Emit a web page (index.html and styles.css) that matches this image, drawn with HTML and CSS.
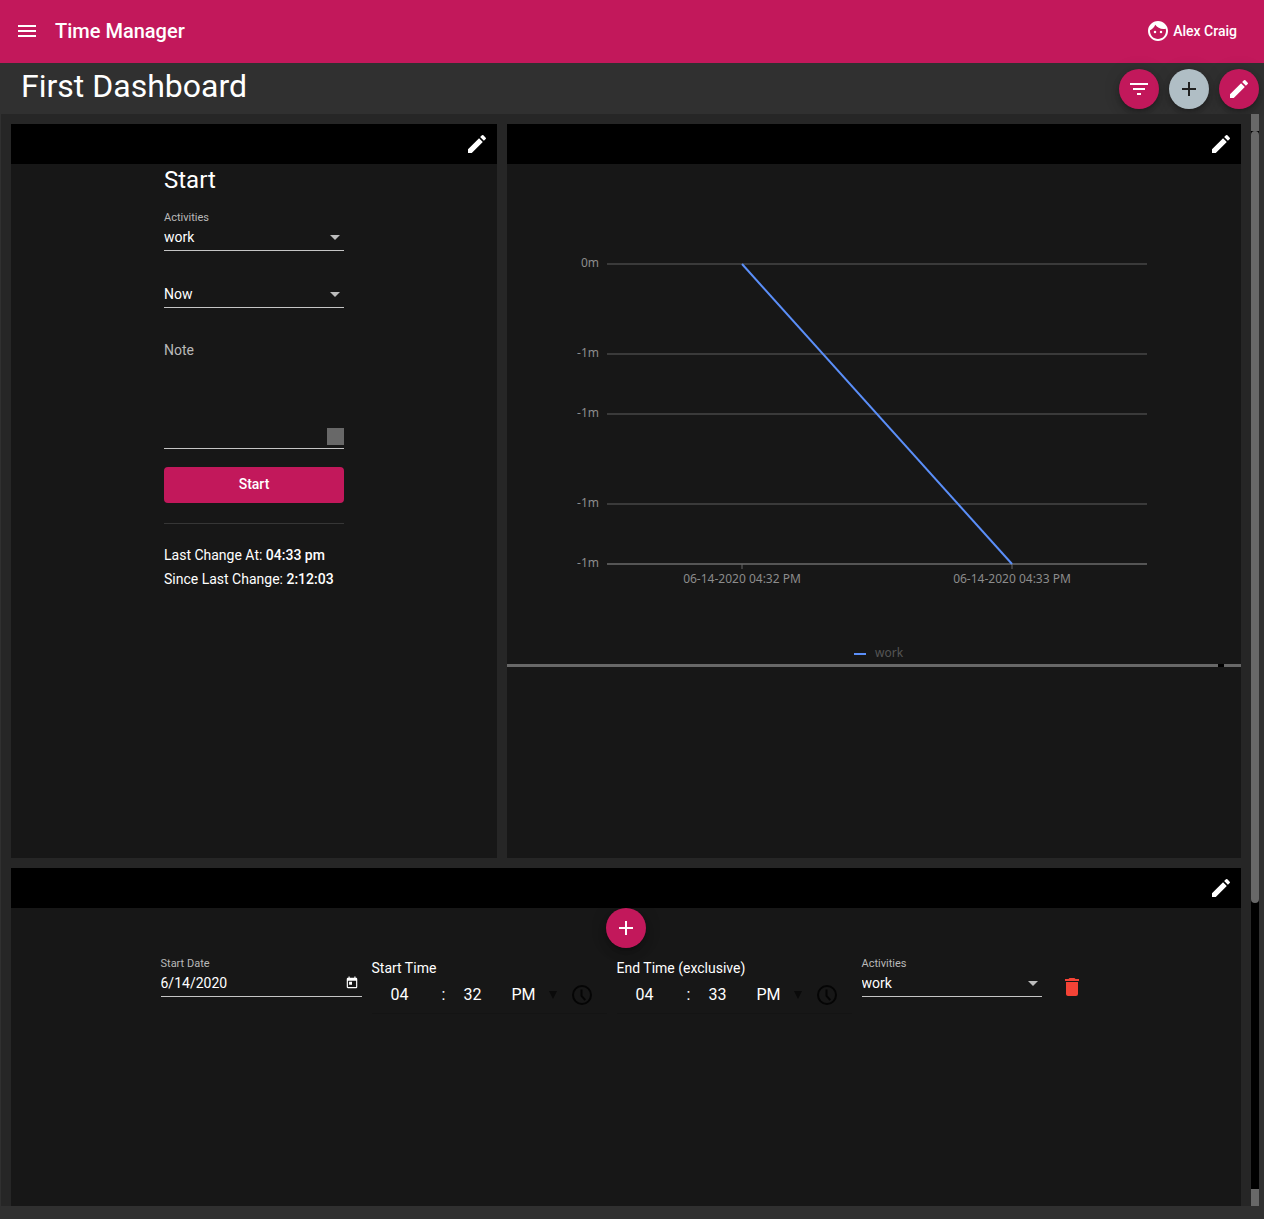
FILE: index.html
```html
<!DOCTYPE html>
<html lang="en">
<head>
<meta charset="utf-8">
<meta name="viewport" content="width=device-width, initial-scale=1">
<title>Time Manager</title>
<link rel="stylesheet" href="styles.css">
</head>
<body>
<svg class="sprite" aria-hidden="true">
  <symbol id="pencil" viewBox="0 0 24 24"><path d="M3 17.25V21h3.75L17.81 9.94l-3.75-3.75L3 17.25zM20.71 7.04a1 1 0 0 0 0-1.41l-2.34-2.34a1 1 0 0 0-1.41 0l-1.83 1.83 3.75 3.75 1.83-1.83z"/></symbol>
  <symbol id="plus" viewBox="0 0 24 24"><path d="M19 13h-6v6h-2v-6H5v-2h6V5h2v6h6v2z"/></symbol>
  <symbol id="caret" viewBox="0 0 10 5"><path d="M0 0h10L5 5z"/></symbol>
  <symbol id="small-caret" viewBox="0 0 8 8"><path d="M0 0h8L4 8z"/></symbol>
  <symbol id="clock" viewBox="0 0 24 24"><path d="M12 2a10 10 0 1 0 0 20 10 10 0 0 0 0-20zm0 18a8 8 0 1 1 0-16 8 8 0 0 1 0 16zM10.500 6.500h2v6l3.500 4-1.500 1.300-4-4.500z"/></symbol>
</svg>

<header class="toolbar">
  <button class="icon-button" type="button" aria-label="Menu">
    <svg class="icon" viewBox="0 0 24 24"><path d="M3 18h18v-2H3v2zm0-5h18v-2H3v2zm0-7v2h18V6H3z"/></svg>
  </button>
  <span class="brand">Time Manager</span>
  <button class="user" type="button">
    <svg class="icon" viewBox="0 0 24 24"><path d="M9 11.75a1.25 1.25 0 1 0 0 2.5 1.25 1.25 0 0 0 0-2.5zm6 0a1.25 1.25 0 1 0 0 2.5 1.25 1.25 0 0 0 0-2.5zM12 2C6.48 2 2 6.48 2 12s4.48 10 10 10 10-4.48 10-10S17.52 2 12 2zm0 18c-4.41 0-8-3.59-8-8 0-.29.02-.58.05-.86 2.36-1.05 4.23-2.98 5.21-5.37C11.07 8.33 14.05 10 17.42 10c.78 0 1.53-.09 2.25-.26.21.71.33 1.47.33 2.26 0 4.41-3.59 8-8 8z"/></svg>
    Alex Craig
  </button>
</header>

<div class="titlebar">
  <h1 class="page-title">First Dashboard</h1>
  <button class="fab" type="button" aria-label="Filter">
    <svg class="icon" viewBox="0 0 24 24"><path d="M10 18h4v-2h-4v2zM3 6v2h18V6H3zm3 7h12v-2H6v2z"/></svg>
  </button>
  <button class="fab fab-grey" type="button" aria-label="Add widget"><svg class="icon"><use href="#plus"/></svg></button>
  <button class="fab" type="button" aria-label="Edit dashboard"><svg class="icon"><use href="#pencil"/></svg></button>
</div>

<div class="board">
  <main class="grid">
    <section class="card">
      <div class="card-bar">
        <button class="icon-button" type="button" aria-label="Edit widget"><svg class="icon"><use href="#pencil"/></svg></button>
      </div>
      <form class="start-form">
        <h2 class="form-title">Start</h2>
        <div class="field">
          <label class="field-label" for="activity">Activities</label>
          <div class="select-box">
            <select class="control" id="activity"><option>work</option></select>
            <svg class="caret"><use href="#caret"/></svg>
          </div>
        </div>
        <div class="select-box when">
          <select class="control" aria-label="When"><option>Now</option></select>
          <svg class="caret"><use href="#caret"/></svg>
        </div>
        <div class="note">
          <label class="note-label" for="note">Note</label>
          <textarea class="note-text" id="note"></textarea>
          <span class="note-corner"></span>
        </div>
        <button class="submit" type="button">Start</button>
        <hr class="divider">
        <p class="info">Last Change At: <b>04:33 pm</b></p>
        <p class="info">Since Last Change: <b>2:12:03</b></p>
      </form>
    </section>

    <section class="card card-chart">
      <div class="card-bar">
        <button class="icon-button" type="button" aria-label="Edit widget"><svg class="icon"><use href="#pencil"/></svg></button>
      </div>
      <svg class="chart" viewBox="0 0 734 500" role="img" aria-label="Time per activity">
        <g class="gridlines">
          <path d="M100 100H640M100 190H640M100 250H640M100 340H640"/>
          <path class="axis" d="M100 400H640"/>
          <path class="tick" d="M235 400v5M505 400v5"/>
        </g>
        <g class="y-labels">
          <text x="92" y="103">0m</text>
          <text x="92" y="193">-1m</text>
          <text x="92" y="253">-1m</text>
          <text x="92" y="343">-1m</text>
          <text x="92" y="403">-1m</text>
        </g>
        <g class="x-labels">
          <text x="235" y="419">06-14-2020 04:32 PM</text>
          <text x="505" y="419">06-14-2020 04:33 PM</text>
        </g>
        <path class="series" d="M235 100L505 400"/>
        <path class="series" d="M347 490h12"/>
        <text class="legend" x="368" y="493">work</text>
      </svg>
      <div class="hscroll"><span class="hscroll-thumb"></span><span class="hscroll-end"></span></div>
    </section>

    <section class="card card-wide">
      <div class="card-bar">
        <button class="icon-button" type="button" aria-label="Edit widget"><svg class="icon"><use href="#pencil"/></svg></button>
      </div>
      <button class="fab fab-center" type="button" aria-label="Add entry"><svg class="icon"><use href="#plus"/></svg></button>
      <form class="entry">
        <div class="field date-field">
          <label class="field-label" for="date">Start Date</label>
          <div class="select-box">
            <input class="control" id="date" type="text" value="6/14/2020">
            <button class="calendar" type="button" aria-label="Open calendar">
              <svg class="calendar-icon" viewBox="0 0 24 24"><path d="M19 3h-1V1h-2v2H8V1H6v2H5a2 2 0 0 0-2 2v14c0 1.100.9 2 2 2h14a2 2 0 0 0 2-2V5a2 2 0 0 0-2-2zm0 16H5V8h14v11zM7 10h5v5H7z"/></svg>
            </button>
          </div>
        </div>
        <fieldset class="time">
          <legend class="time-label">Start Time</legend>
          <div class="time-row">
            <input class="time-part" type="text" value="04" aria-label="Start hour">
            <span class="colon">:</span>
            <input class="time-part minute" type="text" value="32" aria-label="Start minute">
            <span class="period">
              <select class="period-select" aria-label="Start period"><option>PM</option></select>
              <svg class="period-caret"><use href="#small-caret"/></svg>
            </span>
            <button class="clock" type="button" aria-label="Pick start time"><svg class="icon"><use href="#clock"/></svg></button>
          </div>
        </fieldset>
        <fieldset class="time">
          <legend class="time-label">End Time (exclusive)</legend>
          <div class="time-row">
            <input class="time-part" type="text" value="04" aria-label="End hour">
            <span class="colon">:</span>
            <input class="time-part minute" type="text" value="33" aria-label="End minute">
            <span class="period">
              <select class="period-select" aria-label="End period"><option>PM</option></select>
              <svg class="period-caret"><use href="#small-caret"/></svg>
            </span>
            <button class="clock" type="button" aria-label="Pick end time"><svg class="icon"><use href="#clock"/></svg></button>
          </div>
        </fieldset>
        <div class="field activity-field">
          <label class="field-label" for="entry-activity">Activities</label>
          <div class="select-box">
            <select class="control" id="entry-activity"><option>work</option></select>
            <svg class="caret"><use href="#caret"/></svg>
          </div>
        </div>
        <button class="icon-button delete" type="button" aria-label="Delete entry">
          <svg class="icon" viewBox="0 0 24 24"><path d="M6 19c0 1.100.9 2 2 2h8a2 2 0 0 0 2-2V7H6v12zM19 4h-3.500l-1-1h-5l-1 1H5v2h14V4z"/></svg>
        </button>
      </form>
    </section>
  </main>
  <div class="vscroll"><span class="vscroll-cap"></span><span class="vscroll-track"><span class="vscroll-thumb"></span></span><span class="vscroll-cap"></span></div>
</div>
</body>
</html>
```
FILE: styles.css
```css
:root {
  --primary: #c2185b;
  --page: #303030;
  --board: #262626;
  --card: #171717;
  --bar: #686868;
  --line: #c5c5c5;
}

* { box-sizing: border-box; }

body {
  margin: 0;
  min-height: 100vh;
  display: flex;
  flex-direction: column;
  background: var(--page);
  color: #fff;
  font-family: Roboto, "Liberation Sans", sans-serif;
  font-size: 14px;
  line-height: 16px;
}

button, input, select, textarea {
  margin: 0;
  padding: 0;
  border: 0;
  border-radius: 0;
  outline: 0;
  background: none;
  color: inherit;
  font: inherit;
  appearance: none;
}

.sprite { display: none; }

.icon {
  width: 24px;
  height: 24px;
  fill: currentColor;
  flex: none;
}

.toolbar {
  display: flex;
  align-items: center;
  height: 63px;
  padding: 0 27px 1px 7px;
  background: var(--primary);
}

.icon-button {
  display: flex;
  align-items: center;
  justify-content: center;
  width: 40px;
  height: 40px;
}

.brand {
  margin-left: 8px;
  font-size: 20px;
  line-height: 24px;
  font-weight: 500;
}

.user {
  display: flex;
  align-items: center;
  gap: 3px;
  margin-left: auto;
  font-weight: 500;
}

.titlebar {
  display: flex;
  align-items: center;
  gap: 10px;
  height: 51px;
  padding: 0 5px 0 21px;
}

.page-title {
  margin: 0 auto 6px 0;
  font-size: 32px;
  line-height: 40px;
  font-weight: 400;
}

.fab {
  display: flex;
  align-items: center;
  justify-content: center;
  width: 40px;
  height: 40px;
  border-radius: 50%;
  background: var(--primary);
  box-shadow: 0 3px 5px -1px rgba(0, 0, 0, .2), 0 6px 10px rgba(0, 0, 0, .14), 0 1px 18px rgba(0, 0, 0, .12);
}

.fab-grey {
  background: #b0bec5;
  color: #202020;
}

.fab-center { margin: 0 auto; }

.board {
  flex: 1;
  display: flex;
  margin: 0 5px 13px 1px;
}

.grid {
  flex: 1;
  display: grid;
  grid-template-columns: repeat(5, minmax(0, 1fr));
  grid-template-rows: auto 1fr;
  gap: 10px;
  padding: 10px 10px 0;
  background: var(--board);
}

.card {
  grid-column: span 2;
  background: var(--card);
}

.card-chart {
  grid-column: span 3;
  aspect-ratio: 1;
}

.card-wide { grid-column: 1 / -1; }

.card-bar {
  display: flex;
  justify-content: flex-end;
  background: #000;
}

.start-form {
  display: flex;
  flex-direction: column;
  width: 180px;
  margin: 0 auto;
}

.form-title {
  margin: 0 0 15px;
  font-size: 24px;
  line-height: 32px;
  font-weight: 400;
}

.field {
  display: flex;
  flex-direction: column;
  gap: 4px;
}

.field-label {
  color: #b9b9b9;
  font-size: 11px;
  line-height: 14px;
}

.select-box {
  display: flex;
  align-items: center;
  height: 22px;
  padding-bottom: 5px;
  border-bottom: 1px solid var(--line);
}

.control {
  flex: 1;
  min-width: 0;
  height: 16px;
}

.caret {
  width: 10px;
  height: 5px;
  margin-right: 4px;
  fill: #bdbdbd;
}

.when { margin-top: 35px; }

.note {
  position: relative;
  display: flex;
  flex-direction: column;
  margin-top: 34px;
}

.note-label { color: #b9b9b9; }

.note-text {
  height: 91px;
  border-bottom: 1px solid var(--line);
  resize: none;
}

.note-corner {
  position: absolute;
  right: 0;
  bottom: 4px;
  width: 17px;
  height: 17px;
  background: var(--bar);
}

.submit {
  height: 36px;
  margin-top: 18px;
  padding-bottom: 2px;
  border-radius: 4px;
  background: var(--primary);
  font-weight: 500;
}

.divider {
  width: 100%;
  margin: 20px 0 19px;
  border: 0;
  border-top: 1px solid #363636;
}

.info {
  margin: 0;
  line-height: 24px;
  white-space: nowrap;
}

.info b { font-weight: 500; }

.chart {
  display: block;
  width: 100%;
  font-family: "Noto Sans", sans-serif;
  font-size: 12px;
  fill: #8c8c8c;
}

.gridlines {
  stroke: #3a3a3a;
  stroke-width: 2;
}

.axis { stroke: #555; }

.tick {
  stroke: #666;
  stroke-width: 1;
}

.y-labels { text-anchor: end; }

.x-labels { text-anchor: middle; }

.series {
  stroke: #5b8ff9;
  stroke-width: 2;
}

.legend { fill: #555; }

.hscroll {
  display: flex;
  height: 3px;
  gap: 6px;
  background: #000;
}

.hscroll-thumb {
  flex: 1;
  background: var(--bar);
}

.hscroll-end {
  width: 17px;
  background: var(--bar);
}

.entry {
  display: flex;
  justify-content: center;
  align-items: flex-start;
  gap: 10px;
  margin-top: 9px;
}

.date-field { width: 201px; }

.activity-field { width: 180px; }

.calendar {
  display: flex;
  margin-right: 3px;
}

.calendar-icon {
  width: 14px;
  height: 14px;
  fill: currentColor;
}

.time {
  width: 235px;
  min-width: 0;
  margin: 3px 0 0;
  padding: 0;
  border: 0;
}

.time-label {
  padding: 0;
}

.time-row {
  display: grid;
  grid-template-columns: 56px 32px 52px 58px 24px;
  align-items: center;
  height: 38px;
  font-size: 16px;
  line-height: 24px;
  border-bottom: 1px solid #141414;
}

.time-part {
  width: 100%;
  text-align: center;
}

.minute { width: 26px; }

.colon { text-align: center; }

.period {
  display: flex;
  align-items: center;
}

.period-select { width: 37px; }

.period-caret {
  width: 8px;
  height: 8px;
  fill: #0a0a0a;
}

.clock {
  display: flex;
  color: #050505;
}

.delete {
  margin-top: 10px;
  color: #f44336;
}

.vscroll {
  display: flex;
  flex-direction: column;
  width: 8px;
  background: #000;
}

.vscroll-cap {
  height: 17px;
  background: var(--bar);
}

.vscroll-track {
  flex: 1;
  display: flex;
  flex-direction: column;
}

.vscroll-thumb {
  height: 73%;
  border-radius: 4px;
  background: var(--bar);
}
```
